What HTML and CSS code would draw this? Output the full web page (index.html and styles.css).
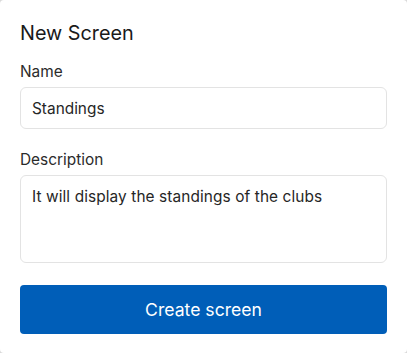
FILE: index.html
```html
<!DOCTYPE html>
<html lang="en">

<head>
    <meta charset="UTF-8">
    <title>New Screen</title>
    <link rel="stylesheet" href="styles.css">
</head>

<body>
    <div class="card">
        <h1 class="title">New Screen</h1>

        <form class="screen-form">
            <label for="name">Name</label>
            <input type="text" id="name" value="Standings">

            <label for="description">Description</label>
            <textarea id="description">It will display the standings of the clubs</textarea>

            <button type="submit" class="create-btn">Create screen</button>
        </form>
    </div>
</body>

</html>
```

FILE: styles.css
```css
html,
body {
    margin: 0;
    height: 100%;
    background: #d9d9d9;
}

body {
    font-family: Inter, "Noto Sans", sans-serif;
    color: #1f1f1f;
}

.card {
    box-sizing: border-box;
    height: 100%;
    background: #fff;
    border-radius: 4px;
    padding: 21px 20px 0;
}

.title {
    margin: 0;
    font-size: 19.8px;
    font-weight: 400;
    line-height: 25px;
    color: #1a1a1a;
}

.screen-form {
    display: flex;
    flex-direction: column;
    margin-top: 16px;
}

.screen-form label {
    font-size: 15.4px;
    line-height: 20px;
    color: #2b2b2b;
    margin-bottom: 5px;
}

.screen-form input,
.screen-form textarea {
    box-sizing: border-box;
    width: 100%;
    font-family: inherit;
    font-size: 15.4px;
    color: #262626;
    border: 1px solid #e3e3e3;
    border-radius: 6px;
    padding: 10px 11px;
    margin: 0 0 21px;
    outline: none;
}

.screen-form input {
    height: 42px;
}

.screen-form textarea {
    height: 88px;
    resize: none;
    line-height: 21px;
    letter-spacing: 0.1px;
}

.create-btn {
    height: 49px;
    margin-top: 1px;
    border: none;
    border-radius: 4px;
    background: #005eb8;
    color: #fff;
    font-family: inherit;
    font-size: 17.6px;
    cursor: pointer;
}
```
